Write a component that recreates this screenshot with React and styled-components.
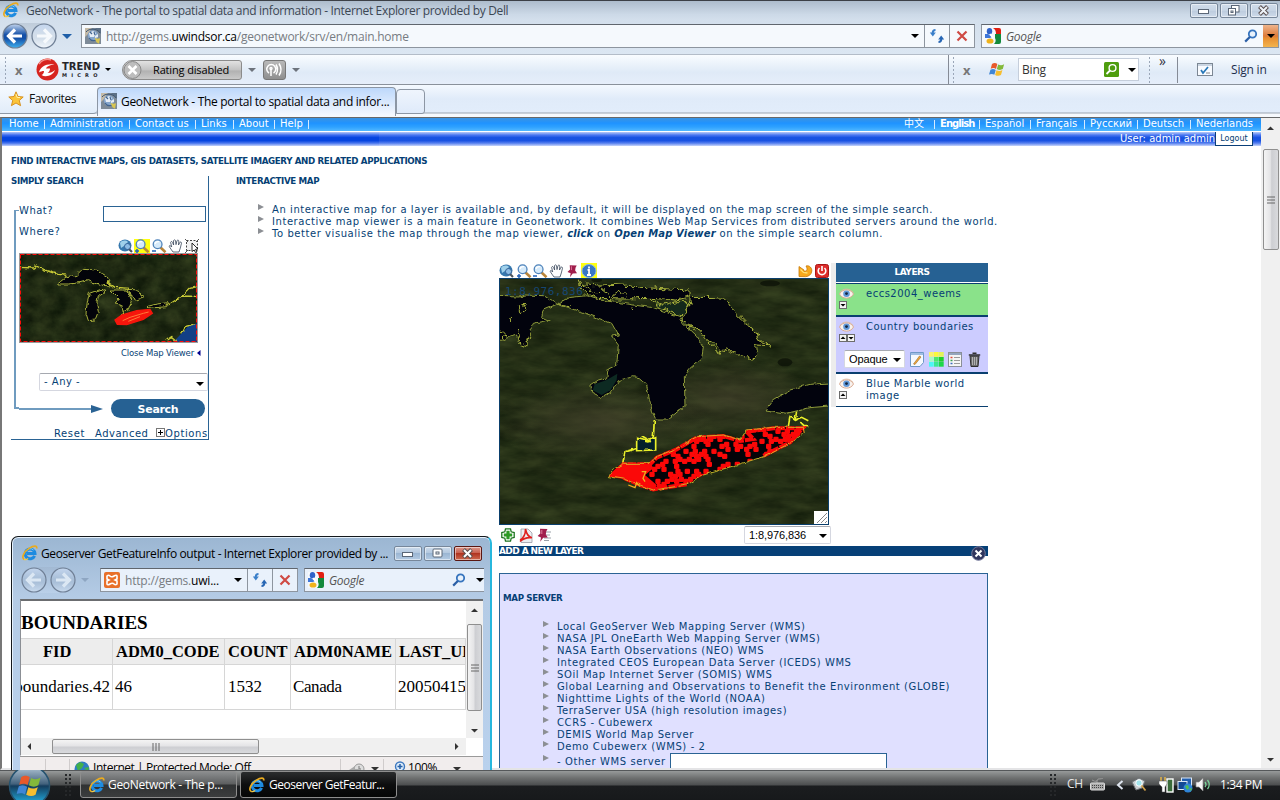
import React from "react";
import styled, { createGlobalStyle, css } from "styled-components";

const VERDANA = '"DejaVu Sans", Verdana, "Noto Sans CJK SC", sans-serif';
const SEGOE = '"Open Sans", "Noto Sans", sans-serif';

const Global = createGlobalStyle`
  * { box-sizing: border-box; }
  body { margin: 0; overflow: hidden; background: #fff; }
  svg { display: block; flex: none; }
`;

const Desktop = styled.div`
  position: relative;
  width: 1280px;
  height: 800px;
  overflow: hidden;
  display: flex;
  flex-direction: column;
  font-family: ${SEGOE};
`;

/* ---------- shared bits ---------- */
const Text = styled.span`
  flex: none;
  white-space: pre;
  font-size: ${(p) => p.$size || 12}px;
  letter-spacing: ${(p) => p.$ls || 0}px;
  width: ${(p) => (p.$w ? p.$w + "px" : "auto")};
  margin-left: ${(p) => p.$ml || 0}px;
  margin-top: ${(p) => p.$mt || 0}px;
  color: ${(p) => p.$c || "#000"};
  font-style: ${(p) => (p.$italic ? "italic" : "normal")};
`;
const Caret = styled.i`
  flex: none;
  width: 0;
  height: 0;
  border: ${(p) => p.$s || 4}px solid transparent;
  border-bottom-width: 0;
  border-top-color: ${(p) => p.$c || "#000"};
  margin-left: ${(p) => p.$ml || 0}px;
  margin-top: ${(p) => p.$mt || 0}px;
`;
const Grip = styled.i`
  flex: none;
  width: ${(p) => p.$w || 2}px;
  height: ${(p) => p.$h || 28}px;
  margin-left: ${(p) => p.$ml || 0}px;
  background: radial-gradient(circle, ${(p) => p.$c || "#9aa6b8"} 0 1px, transparent 1.2px) 0 0 / ${(p) => p.$step || 4}px 4px;
`;
const Spacer = styled.div`
  flex: 1;
`;
const IconBox = styled.span`
  flex: none;
  display: flex;
  margin-left: ${(p) => p.$ml || 0}px;
`;

/* ---------- icons ---------- */
const IELogo = ({ size = 16 }) => (
  <svg width={size} height={size} viewBox="0 0 16 16">
    <path d="M12.6 10.8A4.9 4.9 0 1 1 13 8.6H5" fill="none" stroke="#1e8be0" strokeWidth="3" />
    <path d="M4 6.6A4.6 4.6 0 0 1 11.5 5" fill="none" stroke="#7fd0fa" strokeWidth="1" />
    <path d="M2.2 14.4C-1 13 2 6.5 7 3.4S15.500 .4 14.600 3.600" fill="none" stroke="#e9ab20" strokeWidth="1.700" />
    <path d="M2.2 14.4c1.200.6 2.800 0 4-.800" fill="none" stroke="#f5c842" strokeWidth="1.200" />
  </svg>
);
const Globe = ({ size = 16 }) => (
  <svg width={size} height={size} viewBox="0 0 16 16">
    <rect width="16" height="16" fill="#7e8b98" />
    <path d="M0 0h7L3 6 0 9z" fill="#c3b9a6" />
    <path d="M10 0h6v6z" fill="#5c7086" />
    <circle cx="8" cy="7.500" r="5.200" fill="#86a6cc" />
    <path d="M4 5l4-2 3 2-2 4-4 0zM10 8l3-2v3l-3 1z" fill="#e6edf5" />
    <path d="M4 10c2 3 5 3 7 2M5 4l2 2M9 4l1 3" stroke="#41648f" strokeWidth="1.200" fill="none" />
    <path d="M1 4C4 0 12 0 15 5" stroke="#3c5674" fill="none" />
    <path d="M9.500 10l3 .800 2.500-.5-1 5.500-2.500-1.500z" fill="#d8c652" />
  </svg>
);
const NavDisc = ({ dir, fill, edge, arrow }) => (
  <svg width="26" height="26" viewBox="0 0 26 26">
    <defs>
      <linearGradient id={"d" + dir + fill.slice(1)} x1="0" y1="0" x2="0" y2="1">
        <stop offset="0" stopColor="#c4d6ee" />
        <stop offset=".45" stopColor={fill} />
        <stop offset=".6" stopColor={fill} />
        <stop offset="1" stopColor={edge} />
      </linearGradient>
    </defs>
    <circle cx="13" cy="13" r="12" fill={`url(#d${dir}${fill.slice(1)})`} stroke="#6f7f95" strokeWidth="1.200" />
    <path
      transform={dir === "r" ? "translate(26 0) scale(-1 1)" : undefined}
      d="M13 6.500L6.500 13l6.500 6.500M7.500 13H20"
      fill="none" stroke={arrow} strokeWidth="3.200"
    />
  </svg>
);
const GoogleIcon = () => (
  <svg width="16" height="16" viewBox="0 0 16 16">
    <rect width="16" height="16" fill="#f5f8fc" />
    <path d="M8 0h6a2 2 0 0 1 2 2v4h-5C11 3 10 1 8 0z" fill="#e01f12" />
    <path d="M10 6h6v8a2 2 0 0 1-2 2H9c2-2 2-4 1-6z" fill="#138a3c" />
    <path d="M0 6h3l4 3-2 1H0z" fill="#3f77d8" />
    <ellipse cx="4.500" cy="3.200" rx="2.700" ry="3.200" fill="#2f62c8" />
    <ellipse cx="5" cy="13" rx="3.500" ry="2.600" fill="#f0b31c" />
    <path d="M5 6l3 4" stroke="#fff" strokeWidth="1.500" />
  </svg>
);
const Refresh = () => (
  <svg width="16" height="16" viewBox="0 0 16 16">
    <path d="M6.500 2C3.800 2 3.700 3.500 3.700 5" fill="none" stroke="#3a7fc9" strokeWidth="2" />
    <path d="M.8 4.500h6L3.800 8.500z" fill="#3a7fc9" />
    <path d="M9.500 14c2.700 0 2.800-1.500 2.800-3" fill="none" stroke="#2766b4" strokeWidth="2" />
    <path d="M15.200 11.500h-6l3-4z" fill="#2766b4" />
  </svg>
);
const RedX = () => (
  <svg width="12" height="12" viewBox="0 0 12 12">
    <path d="M1.500 1.500l9 9M10.500 1.500l-9 9" stroke="#cf4a44" strokeWidth="2.200" />
  </svg>
);
const Magnifier = ({ size = 14 }) => (
  <svg width={size} height={size} viewBox="0 0 14 14">
    <circle cx="8.500" cy="5" r="3.700" fill="#e8f2fc" stroke="#3674be" strokeWidth="1.800" />
    <path d="M5.800 8L1.200 12.600" stroke="#2b5fa6" strokeWidth="2.200" />
  </svg>
);
const WinFlag = ({ size = 17 }) => (
  <svg width={size} height={size} viewBox="0 0 20 20">
    <path d="M3.500 3.500C6 2 8 2.300 9.800 3.600L8.200 9.300C6.500 8 4.300 8 2 9z" fill="#e8592a" />
    <path d="M10.800 4c2.500 1.300 4.500 1.300 7-.3L16.200 9.500c-2.300 1.400-4.800 1.200-7-.1z" fill="#83b93a" />
    <path d="M1.700 10.200c2.400-1.200 4.300-1 6.200.300L6.300 16.300C4.500 15 2.300 15 0 16z" fill="#3f86d6" />
    <path d="M8.800 10.900c2.300 1.300 4.600 1.300 7-.200l-1.700 5.800c-2.300 1.400-4.600 1.200-6.900-.100z" fill="#f6be30" />
  </svg>
);
const ZoomGlass = ({ mark }) => (
  <svg width="16" height="14" viewBox="0 0 16 14">
    <path d="M9 8l5.500 5.200" stroke="#b9853a" strokeWidth="2.600" />
    <circle cx="6.600" cy="5.300" r="4.400" fill="#d5eafa" stroke="#4f83ba" strokeWidth="1.300" />
    <path d="M4 5c.5-2 2-2.600 4-2.300" stroke="#fff" fill="none" strokeWidth="1.300" />
    <path d="M1 12h4" stroke="#1f5fb8" strokeWidth="1.500" />
    {mark === "+" && <path d="M3 10v4" stroke="#1f5fb8" strokeWidth="1.500" />}
  </svg>
);
const FullExtent = () => (
  <svg width="16" height="14" viewBox="0 0 16 14">
    <ellipse cx="7" cy="6.500" rx="6.500" ry="6" fill="#3678ae" />
    <path d="M2 4c2-3 6-3 8-1L6 7 3 9z" fill="#9fd0ea" />
    <path d="M9.500 8.500l4.500 4.500" stroke="#4a5560" strokeWidth="2.200" />
    <circle cx="9.500" cy="7.500" r="3" fill="#8cbce4" stroke="#2b568c" strokeWidth=".8" />
  </svg>
);
const Hand = () => (
  <svg width="15" height="14" viewBox="0 0 15 14">
    <path d="M5 13C4 11 2 9.500 1 7.200c.6-1 1.700-.6 2.700.8L2.600 3.300c.5-1.200 1.500-1 2 .2L5.600 6 5.500 1.600c.6-1 1.600-1 2 0L8 5.600l1-4c.7-.8 1.700-.6 1.800.5L10.500 6l1.500-2.800c.8-.5 1.600 0 1.500 1L12.300 9 11 13z" fill="#fff" stroke="#39465a" strokeWidth=".8" />
  </svg>
);
const SelectBox = () => (
  <svg width="15" height="14" viewBox="0 0 15 14">
    <rect x="1.500" y="1.500" width="11" height="10" fill="#f1f1f1" stroke="#444" strokeDasharray="2 1.500" />
    <path d="M0 0l3 3M14 0l-3 3M0 14l3-3" stroke="#555" />
    <path d="M7 4l6 6-2.500.3L12 13l-1.500.6L9.200 11 7 12.500z" fill="#fff" stroke="#111" strokeWidth=".9" />
  </svg>
);
const Pin = ({ lines }) => (
  <svg width={lines ? 15 : 14} height="14" viewBox="0 0 15 14">
    {lines && <path d="M8 4h7M8 7h6M8 10h7M8 12.500h5" stroke="#9aa0a8" />}
    <path d="M4 .8l7.500.2-1.300 2.500-.4 3 2 3-4.600.3L4.200 13.800 5 9.400 1.600 8l2.700-2.500z" fill="#a01e4c" />
    <path d="M5.800 2v4" stroke="#dd7b9c" />
  </svg>
);
const Info = () => (
  <svg width="16" height="14" viewBox="0 0 16 14">
    <ellipse cx="8" cy="7" rx="7" ry="6.500" fill="#3977c5" stroke="#85b4e8" />
    <path d="M8 2.500v2M6.500 6H8v5M6 11h4" stroke="#fff" strokeWidth="1.800" />
  </svg>
);
const Undo = () => (
  <svg width="15" height="14" viewBox="0 0 15 14">
    <path d="M1 2.500l5 3.500v1.500c1.500 0 3.500-1 3-3.500L8 2c3.500-1 6 2 5.800 5-.3 3.500-3 5.500-6.300 5.700L1 12.500z" fill="#f7a81c" stroke="#c77808" strokeWidth=".8" />
    <path d="M2.500 5.500l3 3 4 .500" fill="none" stroke="#ffe173" strokeWidth="1.300" />
  </svg>
);
const Power = () => (
  <svg width="14" height="14" viewBox="0 0 14 14">
    <rect x=".5" y=".5" width="13" height="13" rx="2" fill="#dc2c2a" stroke="#a81616" />
    <path d="M4.500 4a3.800 3.800 0 1 0 5 0" fill="none" stroke="#fff" strokeWidth="1.600" />
    <path d="M7 2v5" stroke="#fff" strokeWidth="1.600" />
  </svg>
);
const AddCross = () => (
  <svg width="14" height="14" viewBox="0 0 14 14">
    <path d="M4.500.8h5l.7 3 3 .7v5l-3 .7-.7 3h-5l-.7-3-3-.7v-5l3-.7z" fill="#fff" stroke="#1d7420" strokeWidth="1.300" />
    <path d="M7 2.800v8.400M2.800 7h8.400" stroke="#2c9a25" strokeWidth="3.200" />
  </svg>
);
const Pdf = () => (
  <svg width="14" height="15" viewBox="0 0 14 15">
    <path d="M2 1h7l4 4v9.500H2z" fill="#eceef2" stroke="#9a9ca6" strokeWidth=".8" />
    <path d="M1 12c4-2 5.500-5 5.500-11C7.500 6 9 9 13 9.800 8 9 5 10 1 13.500" fill="none" stroke="#e0201e" strokeWidth="1.600" />
  </svg>
);
const Eye = () => (
  <svg width="15" height="12" viewBox="0 0 15 12">
    <path d="M.5 6C3 .5 12 .5 14.500 6 12 11.500 3 11.500.500 6z" fill="#f8f2ee" stroke="#d9ab93" />
    <path d="M1 4.500C4 0 11 0 14 4.500" stroke="#dfbca5" fill="none" />
    <circle cx="7.500" cy="5.800" r="3.300" fill="#5f97d8" />
    <circle cx="7.500" cy="5.600" r="1.400" fill="#14243c" />
  </svg>
);
const Mover = ({ up }) => (
  <svg width="8" height="8" viewBox="0 0 8 8">
    <rect x=".5" y=".5" width="7" height="7" fill="#f4f4f4" stroke="#6c6c6c" />
    <path d={up ? "M1.500 5h5L4 2.500z" : "M1.500 3h5L4 5.500z"} fill="#000" />
  </svg>
);
const EditDoc = () => (
  <svg width="14" height="15" viewBox="0 0 14 15">
    <path d="M.5.500h13v10l-3.500 4H.5z" fill="#f5f9ff" stroke="#6f98c8" />
    <path d="M.5 2h13" stroke="#83aadb" strokeWidth="1.500" />
    <path d="M3.500 12L9.500 4l1.500 1-6 7.500z" fill="#f0a73a" stroke="#9c6a24" strokeWidth=".6" />
  </svg>
);
const Palette = () => (
  <svg width="15" height="15" viewBox="0 0 15 15">
    {["#fbf36a", "#fbf83c", "#e3f458", "#a7f7c8", "#4be86c", "#1fd02a", "#4bf7f4", "#3ae794", "#1dd748"].map((c, i) => (
      <rect key={i} x={(i % 3) * 5} y={Math.floor(i / 3) * 5} width="4.700" height="4.700" fill={c} />
    ))}
  </svg>
);
const Legend = () => (
  <svg width="14" height="15" viewBox="0 0 14 15">
    <rect x=".5" y=".5" width="13" height="14" fill="#f5f5f5" stroke="#8a8f98" />
    <path d="M1 2h12" stroke="#94a5bd" strokeWidth="2" />
    <path d="M2.500 5.500h2" stroke="#e04a3a" strokeWidth="1.500" />
    <path d="M2.500 8.500h2" stroke="#3c9f4c" strokeWidth="1.500" />
    <path d="M2.500 11.500h2" stroke="#3c6cc0" strokeWidth="1.500" />
    <path d="M6 5.500h6M6 8.500h6M6 11.500h6" stroke="#9a9a9a" />
  </svg>
);
const Trash = () => (
  <svg width="13" height="15" viewBox="0 0 13 15">
    <path d="M2 4h9l-1 10.500H3z" fill="#6e6e6e" stroke="#2e2e2e" />
    <path d="M.8 3h11.400M4.500 1.200h4" stroke="#2e2e2e" strokeWidth="1.600" />
    <path d="M4.500 5v8M6.500 5v8M8.500 5v8" stroke="#b8b8b8" strokeWidth=".9" />
  </svg>
);
const CloseBall = () => (
  <svg width="15" height="15" viewBox="0 0 15 15">
    <circle cx="7.500" cy="7.500" r="6.800" fill="#30365e" stroke="#777b9c" />
    <path d="M4.500 4.500l6 6M10.500 4.500l-6 6" stroke="#fff" strokeWidth="2" />
  </svg>
);
const Star = () => (
  <svg width="16" height="16" viewBox="0 0 16 16">
    <path d="M8 .8l2 4.700 5.200.5-3.900 3.500 1.300 5.200L8 12l-4.600 2.700 1.300-5.200L.8 6 6 5.500z" fill="#fbc43a" stroke="#d48a16" strokeWidth=".9" />
    <path d="M8 3l1.200 3.500H12" stroke="#fff1a8" fill="none" />
  </svg>
);
const TrendBall = () => (
  <svg width="23" height="23" viewBox="0 0 23 23">
    <circle cx="11.500" cy="11.500" r="11" fill="#d7241f" />
    <path d="M3 14.500C4 8.500 11 5 18.500 6.500 13.500 7 11 8.500 10 10.500h4c0 2-1 3.500-2.500 4.500 3 0 5.500-1.200 7.500-3-1.500 5-9 8-13.500 5 1.500-.5 2.500-2 2.500-4-2 0-3.500.5-5 1.500z" fill="#fff" />
    <path d="M3 6a10 10 0 0 1 12-4" stroke="#f5928c" fill="none" strokeWidth="1.500" />
  </svg>
);

/* ---------- browser chrome ---------- */
const TitleBar = styled.header`
  height: 20px;
  flex: none;
  display: flex;
  align-items: center;
  padding: 0 2px 1px 3px;
  border-top: 1px solid #3c4046;
  background: linear-gradient(#adbccc, #ccd9e7 70%, #d3dfec);
`;
const WinButton = styled.span`
  flex: none;
  width: 28px;
  height: ${(p) => p.$h || 15}px;
  margin-left: ${(p) => (p.$ml === undefined ? 2 : p.$ml)}px;
  border: 1px solid ${(p) => (p.$red ? "#5a1712" : "#77879a")};
  border-radius: 2px;
  box-shadow: inset 0 0 0 1px rgba(255, 255, 255, 0.5);
  background: ${(p) =>
    p.$red ? "linear-gradient(#dd9a8e, #c9604f 45%, #b03420 50%, #cf6a50)" : p.$blue ? "linear-gradient(#cddcec, #b3c8df 45%, #9bb6d3 50%, #b4cbe3)" : "linear-gradient(#d0dcea, #c6d4e4 50%, #bccbdd 51%, #cddaea)"};
  display: flex;
  align-items: center;
  justify-content: center;
`;
const Glyph = ({ kind, light }) => (
  <svg width="14" height="11" viewBox="0 0 14 11">
    {kind === "min" && <rect x="1.500" y="4.500" width="10" height="4" fill="#fff" stroke="#5b6777" />}
    {kind === "max" && <><rect x="2" y="1" width="9" height="8" rx="1" fill="#fff" stroke="#5b6777" /><rect x="5" y="4" width="3" height="2" fill="#fff" stroke="#5b6777" /></>}
    {kind === "restore" && <><rect x="4.500" y=".5" width="7.500" height="6.500" fill="#fff" stroke="#5b6777" /><rect x="1.500" y="3.500" width="7" height="6.500" fill="#fff" stroke="#5b6777" /><rect x="4" y="6" width="2" height="1.500" fill="#fff" stroke="#5b6777" /></>}
    {kind === "x" && <><path d="M2.500 1.500l8 8M10.500 1.500l-8 8" stroke="#5b5050" strokeWidth="4" /><path d="M3 2l7 7M10 2L3 9" stroke={light ? "#fff" : "#eef3f8"} strokeWidth="2" /></>}
  </svg>
);
const NavBar = styled.div`
  height: 34px;
  flex: none;
  display: flex;
  align-items: center;
  padding: 0 1px 2px 2px;
  background: linear-gradient(#d3dfec, #dbe6f2);
`;
const DiscPair = styled.div`
  flex: none;
  display: flex;
  gap: 3px;
  height: 26px;
  border-radius: 13px;
  background: linear-gradient(${(p) => (p.$blue ? "#a2b9d3, #bad0e9" : "#bfccda, #dbe5f0")});
`;
const Field = styled.div`
  flex: none;
  display: flex;
  align-items: center;
  height: 24px;
  width: ${(p) => p.$w}px;
  margin-left: ${(p) => p.$ml}px;
  padding-left: 3px;
  overflow: hidden;
  background: ${(p) => p.$bg || "#f5f9fd"};
  border: 1px solid #8d959f;
  border-top-color: #60666e;
  ${(p) => p.$open && css`border-right: 0;`}
`;
const FieldCell = styled.span`
  flex: none;
  width: ${(p) => p.$w}px;
  height: 100%;
  display: flex;
  align-items: center;
  justify-content: center;
  border-left: 1px solid #8d959f;
`;
const OrangeDrop = styled.span`
  flex: none;
  width: 15px;
  height: 100%;
  display: flex;
  align-items: center;
  justify-content: center;
  background: linear-gradient(#eeb48c, #dd7b3a 50%, #e88f32 60%, #f3b44d);
`;
const ToolBar = styled.div`
  height: 31px;
  flex: none;
  display: flex;
  align-items: center;
  padding-left: 4px;
  border-top: 1px solid #b3bcc8;
  border-bottom: 1px solid #8a919b;
  background: linear-gradient(#f9fcff, #dfeaf7 60%, #e6eefa);
`;
const VLine = styled.i`
  flex: none;
  width: 1px;
  height: ${(p) => p.$h || 29}px;
  margin-left: ${(p) => p.$ml || 0}px;
  background: ${(p) => p.$c || "#858b96"};
`;
const TrendName = styled.span`
  flex: none;
  width: 41px;
  margin-left: 3px;
  display: flex;
  flex-direction: column;
  font: bold 10px/10px "DejaVu Sans", sans-serif;
  color: #26262a;
  letter-spacing: 0;
  small {
    font-size: 5px;
    line-height: 6px;
    letter-spacing: 4.2px;
  }
`;
const Rating = styled.span`
  flex: none;
  width: 120px;
  height: 20px;
  margin-left: 11px;
  display: flex;
  align-items: center;
  border: 1px solid #8b8b8b;
  border-radius: 10px 3px 3px 10px;
  background: linear-gradient(#e2e2e2, #c2c2c2 50%, #b1b1b1 55%, #c9c9c9);
`;
const Signal = styled.span`
  flex: none;
  width: 23px;
  height: 20px;
  margin-left: 7px;
  border: 1px solid #777;
  border-radius: 3px;
  background: linear-gradient(#b9b9b9, #8f8f8f);
`;
const BingBox = styled.span`
  flex: none;
  width: 121px;
  height: 23px;
  margin-left: 12px;
  padding: 0 2px 0 3px;
  display: flex;
  align-items: center;
  background: #fff;
  border: 1px solid #c5cedb;
`;
const TabRow = styled.div`
  height: 32px;
  flex: none;
  display: flex;
  align-items: flex-start;
  background: linear-gradient(#f4f9ff, #e0ebf9 14px, #e2edfb 27px, #9ba5b1 28px, #f6f9fd 29px);
`;
const Favorites = styled.div`
  flex: none;
  width: 97px;
  height: 29px;
  padding: 0 0 1px 8px;
  display: flex;
  align-items: center;
  border-bottom: 1px solid #8e98a5;
  border-radius: 0 0 4px 0;
  background: linear-gradient(#f6faff, #e1ecf9);
`;
const Tab = styled.div`
  flex: none;
  width: ${(p) => p.$w}px;
  height: ${(p) => (p.$active ? 29 : 25)}px;
  margin-top: ${(p) => (p.$active ? 2 : 4)}px;
  padding: 0 0 2px 3px;
  display: flex;
  align-items: center;
  border: 1px solid #8c96a4;
  border-bottom-width: ${(p) => (p.$active ? 0 : 1)}px;
  border-radius: 4px 4px ${(p) => (p.$active ? "0 0" : "3px 0")};
  background: ${(p) => (p.$active ? "linear-gradient(#bdd8fb, #d9e8fd 50%, #f6f9fe)" : "linear-gradient(#eff5fd, #dfeafa)")};
`;

/* ---------- page ---------- */
const Viewport = styled.div`
  flex: none;
  height: 653px;
  display: flex;
  border-top: 1px solid #686868;
  border-left: 2px solid #777;
  border-bottom: 2px solid #e4e4e6;
`;
const Page = styled.main`
  width: 1259px;
  height: 650px;
  overflow: hidden;
  font-family: ${VERDANA};
  font-size: 10px;
  line-height: 12px;
  letter-spacing: 0.5px;
  color: #063f75;
`;
const TopLinks = styled.nav`
  height: 13px;
  margin-bottom: 1px;
  display: flex;
  justify-content: space-between;
  letter-spacing: 0;
  background: linear-gradient(#3b93e2, #1f93ff 40%, #2ea2ff 70%, #52b8ff);
  color: #fff;
`;
const LinkSet = styled.div`
  display: flex;
  padding-left: 7px;
  padding-right: 9px;
`;
const TopLink = styled.a`
  width: ${(p) => p.$w}px;
  margin-right: ${(p) => (p.$last ? 0 : 5)}px;
  line-height: 12px;
  white-space: nowrap;
  font-weight: ${(p) => (p.$bold ? "bold" : "normal")};
  letter-spacing: ${(p) => p.$ls || 0}px;
  background: ${(p) => (p.$last ? "none" : "linear-gradient(#d5ebff, #d5ebff) right 2px / 1px 9px no-repeat")};
`;
const UserBar = styled.div`
  height: 14px;
  padding-right: 8px;
  display: flex;
  justify-content: flex-end;
  line-height: 14px;
  letter-spacing: 0;
  color: #fff;
  background: linear-gradient(90deg, #fff0 377px, #ffffff14 377px), linear-gradient(#b4c8f8, #3c6cf0 22%, #0544e0 40%, #0544e0 62%, #4a76ee 80%, #c3d1fa);
`;
const Logout = styled.button`
  width: 38px;
  height: 14px;
  margin: 0;
  padding: 0;
  font: 8px/11px ${VERDANA};
  color: #063f75;
  background: #fff;
  border: 1px solid #0a3f78;
  border-top: 0;
  letter-spacing: 0;
`;
const PageBody = styled.div`
  padding: 10px 0 0 9px;
`;
const Heading = styled.h2`
  margin: 0;
  height: 11px;
  font-size: 8.7px;
  line-height: 11px;
  font-weight: bold;
  white-space: nowrap;
  letter-spacing: -0.37px;
`;
const Columns = styled.div`
  display: flex;
  align-items: flex-start;
  margin-top: 9px;
`;
const Aside = styled.aside`
  width: 198px;
  height: 264px;
  border-right: 1px solid #2a6394;
  border-bottom: 1px solid #2a6394;
`;
const FormGrid = styled.div`
  display: grid;
  grid-template-columns: 5px 189px;
  padding-left: 3px;
  margin-top: 18px;
`;
const Bracket = styled.div`
  height: 199px;
  margin-top: 5px;
  border: 2px solid #6f9bbf;
  border-width: 1px 0 2px 2px;
`;
const FormBody = styled.div`
  display: flex;
  flex-direction: column;
`;
const WhatRow = styled.label`
  display: flex;
  justify-content: space-between;
  line-height: 12px;
  padding-right: 2px;
`;
const WhatInput = styled.span`
  width: 103px;
  height: 16px;
  margin-top: 1px;
  border: 1px solid #2a6394;
  background: #fff;
`;
const MiniTools = styled.div`
  display: flex;
  height: ${(p) => p.$h || 15}px;
  padding-left: ${(p) => p.$pl || 0}px;
  align-items: center;
`;
const ToolIcon = styled.span`
  width: ${(p) => p.$w || 16}px;
  height: ${(p) => p.$h || 14}px;
  display: flex;
  align-items: center;
  justify-content: center;
  background: ${(p) => (p.$on ? "#ffff10" : "transparent")};
`;
const MiniMapBox = styled.div`
  width: 179px;
  height: 90px;
  border: 1px solid #999;
`;
const CloseViewer = styled.a`
  display: flex;
  align-items: center;
  gap: 3px;
  margin: 4px 0 14px 102px;
  height: 12px;
  font-size: 8.5px;
  letter-spacing: -0.15px;
  white-space: nowrap;
`;
const SelectBoxUi = styled.span`
  display: flex;
  flex: none;
  align-items: center;
  justify-content: space-between;
  width: ${(p) => p.$w}px;
  height: 18px;
  padding: 0 3px 0 4px;
  background: #fff;
  color: ${(p) => (p.$plain ? "#000" : "#063f75")};
  border: 1px solid #d5d7e0;
  border-top-color: #a6a9b0;
  border-radius: 2px;
  font-family: ${(p) => (p.$plain ? '"Liberation Sans", sans-serif' : "inherit")};
  font-size: ${(p) => (p.$plain ? 11 : 10)}px;
  letter-spacing: ${(p) => (p.$plain ? "-0.1px" : "inherit")};
`;
const SearchRow = styled.div`
  display: flex;
  align-items: center;
  margin-top: 8px;
`;
const SearchButton = styled.span`
  width: 94px;
  height: 19px;
  margin-left: 7px;
  border-radius: 10px;
  background: #266193;
  color: #fff;
  font-weight: bold;
  font-size: 11px;
  line-height: 21px;
  text-align: center;
  letter-spacing: -0.3px;
`;
const FormLinks = styled.div`
  display: flex;
  margin: 10px 0 0 43px;
  white-space: nowrap;
`;
const Main = styled.section`
  width: 770px;
  margin-left: 27px;
`;
const Bullets = styled.ul`
  list-style: none;
  margin: ${(p) => p.$mt}px 0 0 ${(p) => p.$ml}px;
  padding: 0;
  letter-spacing: ${(p) => p.$ls || 0.57}px;
`;
const Bullet = styled.li`
  height: ${(p) => p.$h || 12}px;
  line-height: ${(p) => p.$lh || 12}px;
  display: flex;
  white-space: nowrap;
  b { letter-spacing: 0.15px; }
  &::before {
    content: "";
    flex: none;
    width: 0;
    height: 0;
    margin: ${(p) => p.$mk || 0}px 8px 0 0;
    border: 3px solid transparent;
    border-left: 6px solid #8c8f94;
    border-right: 0;
  }
`;
const MapWidget = styled.div`
  display: flex;
  margin: 23px 0 0 263px;
`;
const MapColumn = styled.div`
  width: 332px;
`;
const MapFrame = styled.div`
  width: 330px;
  height: 247px;
  border: 1px solid #0a3f6c;
  position: relative;
`;
const ScaleText = styled.span`
  position: absolute;
  left: 5px;
  top: 7px;
  color: #154673;
  font: 11px/12px "DejaVu Sans Mono", monospace;
  letter-spacing: 0.5px;
`;
const Resize = styled.span`
  position: absolute;
  right: 0;
  bottom: 0;
`;
const Layers = styled.div`
  width: 157px;
  height: 144px;
  border-left: 5px solid #ececec;
`;
const LayersHead = styled.div`
  height: 19px;
  margin-bottom: 1px;
  background: #266193;
  color: #fff;
  font: bold 9px/19px ${VERDANA};
  letter-spacing: -0.5px;
  text-align: center;
`;
const LayerRow = styled.div`
  height: ${(p) => p.$h}px;
  background: ${(p) => p.$bg};
  border-top: ${(p) => (p.$first ? 1 : 0)}px solid #0a3f70;
  border-bottom: ${(p) => p.$b || 2}px solid #0a3f70;
`;
const LayerTop = styled.div`
  display: flex;
  padding: 4px 0 0 3px;
  line-height: 12px;
`;
const LayerSide = styled.div`
  width: 27px;
  svg { margin-bottom: 1px; }
`;
const Movers = styled.div`
  display: flex;
`;
const LayerTools = styled.div`
  display: flex;
  align-items: center;
  padding: 7px 0 0 8px;
`;
const AddBar = styled.div`
  width: 489px;
  height: 10px;
  margin: 1px 0 0 263px;
  padding-right: 2px;
  display: flex;
  justify-content: space-between;
  background: #064077;
  color: #fff;
  font: bold 9px/10px ${VERDANA};
  letter-spacing: -0.6px;
`;
const ServerPanel = styled.div`
  width: 489px;
  height: 230px;
  margin: 17px 0 0 263px;
  padding: 19px 0 0 3px;
  border: 1px solid #2a6394;
  background: #e0e0ff;
`;
const ServerInput = styled.span`
  width: 217px;
  height: 20px;
  margin-left: 4px;
  background: #fff;
  border: 1px solid #2a6394;
`;
const ScrollBar = styled.div`
  display: flex;
  flex-direction: ${(p) => (p.$x ? "row" : "column")};
  align-items: center;
  flex: none;
  width: ${(p) => p.$w}px;
  height: ${(p) => p.$h}px;
  padding: ${(p) => p.$pad};
  background: #f0f0f0;
`;
const Thumb = styled.div`
  flex: none;
  width: ${(p) => p.$w}px;
  height: ${(p) => p.$h}px;
  margin: ${(p) => p.$m || 0};
  display: flex;
  align-items: center;
  justify-content: center;
  border: 1px solid #8f8f8f;
  border-radius: 2px;
  background: linear-gradient(${(p) => (p.$x ? "180deg" : "90deg")}, #f4f4f4, #e4e4e6 45%, #cdced2 55%, #d9dadd);
`;
const Ridges = ({ x }) => (
  <svg width="8" height="8" viewBox="0 0 8 8">
    <path d={x ? "M1 0v8M4 0v8M7 0v8" : "M0 1h8M0 4h8M0 7h8"} stroke="#666" />
  </svg>
);
const Arrow = ({ d }) => (
  <svg width="9" height="9" viewBox="0 0 9 9">
    <path d={{ u: "M1 6h7L4.500 2.500z", d: "M1 3h7L4.500 6.500z", l: "M6 1v7L2.500 4.500z", r: "M3 1v7l3.500-3.500z" }[d]} fill="#333" />
  </svg>
);

/* ---------- maps ---------- */
const Terrain = ({ id, base, seed, freq }) => (
  <filter id={id} x="0" y="0" width="100%" height="100%" colorInterpolationFilters="sRGB">
    <feTurbulence type="fractalNoise" baseFrequency={freq} numOctaves="5" seed={seed} />
    <feColorMatrix values={base} />
  </filter>
);
const Rough = ({ id, freq, scale, seed }) => (
  <filter id={id} x="-5%" y="-5%" width="110%" height="110%" colorInterpolationFilters="sRGB">
    <feTurbulence type="fractalNoise" baseFrequency={freq} numOctaves="2" seed={seed} result="n" />
    <feDisplacementMap in="SourceGraphic" in2="n" scale={scale} xChannelSelector="R" yChannelSelector="G" />
  </filter>
);
const HURON = "M20 124L90 126 105 120 160 122 200 148 235 128 290 122 330 135 420 148 490 158 570 185 578 205 620 245 640 275 635 310 600 340 583 365 585 455 560 470 530 492 497 492 487 470 478 430 470 390 445 368 430 365 385 377 365 410 335 427 305 412 303 390 325 375 350 368 355 342 380 330 385 270 365 243 385 240 365 205 300 180 250 162 200 148 160 165 155 185 178 195 130 205 115 240 100 275 85 262 80 240 50 250 20 264z";
const CHANNEL = "M265 75L290 90 330 93 400 90 440 96 500 100 600 105 600 125 560 135 520 132 480 130 400 132 320 130 280 112z";
const GEORGIAN = "M600 128L650 127 705 130 725 160 745 180 770 205 800 235 805 255 838 272 800 270 803 300 785 315 740 296 690 285 670 262 640 250 630 225 590 212 578 190 600 150z";
const ONTARIO = "M1030 383L960 388 900 405 850 435 828 465 890 475 960 458 1030 452z";
const ERIE = "M355 665L375 640 400 625 480 625 500 605 560 580 620 545 700 540 750 555 770 525 850 517 940 517 943 530 900 565 820 605 740 630 640 660 590 690 490 705 450 690 400 672z";
const cells = [];
for (let r = 0; r < 13; r++) {
  for (let c = 0; c < 34; c++) {
    const x = 478 + c * 14 + (r % 3) * 4, y = 515 + r * 15 + (c % 2) * 6;
    if ((r * 7 + c * 5 + ((r * c) % 4) * 3) % 9 < 4) cells.push([x, y]);
  }
}
const BigMap = () => (
  <svg width="328" height="245" viewBox="30 72 984 735">
    <defs>
      <Terrain id="landA" seed="7" freq="0.009 0.028" base="0.17 0.06 0 0 0.025  0.17 0.08 0 0 0.055  0.10 0.04 0 0 0.012  0 0 0 0 1" />
      <Rough id="rough" freq=".05" scale="14" seed="3" />
      <Rough id="rougher" freq=".06" scale="26" seed="5" />
      <clipPath id="erie"><path d={ERIE} /></clipPath>
      <radialGradient id="dim"><stop offset="0" stopColor="#4a4530" stopOpacity=".6" /><stop offset="1" stopColor="#4a4530" stopOpacity="0" /></radialGradient>
    </defs>
    <rect x="30" y="72" width="984" height="735" filter="url(#landA)" />
    <ellipse cx="330" cy="500" rx="330" ry="120" fill="url(#dim)" />
    <ellipse cx="720" cy="430" rx="260" ry="120" fill="url(#dim)" />
    <g fill="#0a0f06" opacity=".7"><ellipse cx="840" cy="85" rx="30" ry="9" /><ellipse cx="885" cy="322" rx="22" ry="12" /><ellipse cx="320" cy="75" rx="16" ry="6" /></g>
    <g stroke="#8f9b3a" strokeWidth="3" fill="#02030d" filter="url(#rough)">
      <path d={HURON} />
      <path d={ONTARIO} />
    </g>
    <path d="M308 406L314 388 350 375 382 356 380 375 362 405 335 420z" fill="#0d2a22" />
    <g stroke="#a9b33c" strokeWidth="3" fill="#02030d" filter="url(#rougher)">
      <path d={CHANNEL} />
      <path d={GEORGIAN} />
      <path d="M480 135L520 150 560 140 600 140 595 160 570 182 520 162z" fill="#14291b" />
      <path d="M85 155l15-8 8 18-16 10zM55 190l8 4M85 225l8 40 14 10 18-50M32 230l12 10-8 18M205 150l40 6M425 158l6 6" />
      <path d="M270 85l50 30 15-15 30 25 25-20 25 22M765 205l30 25 5 25 25 0 15 20M640 250l30 25 15 20 25-15 30 15" fill="none" />
    </g>
    <g fill="#03202b" stroke="#eaf02a" strokeWidth="5" filter="url(#rough)">
      <path d="M440 550L470 558 497 548 497 585 440 587z" />
      <path d="M493 495L490 545 480 560 455 545M440 580L405 590 398 625M895 515l5-30 15 10 5-25M915 495l20-8 20 10M930 500l15 15 10 0" fill="none" />
    </g>
    <path d={ERIE} fill="#050308" />
    <g clipPath="url(#erie)">
      {cells.map(([x, y], i) => <rect key={i} x={x} y={y} width="16" height="16" rx="4" fill="#fb0808" />)}
      <path d="M350 665L400 620 480 620 490 640 465 660 500 690 490 712 350 700z" fill="#fb0808" />
    </g>
    <path d="M368 660L400 628 480 628 500 608 560 583 620 548 700 543 750 558 790 552 770 530 850 520 938 520 900 562 820 602M590 688L490 703 450 690 400 668" fill="none" stroke="#fb0808" strokeWidth="12" strokeDasharray="26 3" />
    <path d={ERIE} fill="none" stroke="#d6c92a" strokeWidth="2.500" filter="url(#rough)" />
    <path d="M415 690l20 8 5-15 10 12M455 650l12 0-8 20 6 10" fill="none" stroke="#f0b01e" strokeWidth="4" />
  </svg>
);
const MiniMap = () => (
  <svg width="177" height="88" viewBox="60 312 531 264">
    <defs>
      <Terrain id="landB" seed="12" freq="0.02 0.025" base="0.18 0.06 0 0 0  0.18 0.08 0 0 0.03  0.10 0.04 0 0 0  0 0 0 0 1" />
      <Rough id="rs" freq=".07" scale="14" seed="2" />
    </defs>
    <rect x="60" y="312" width="531" height="264" filter="url(#landB)" />
    <path d="M591 520L565 528 545 550 520 576 591 576z" fill="#123f86" />
    <g fill="#03040a" stroke="#a9b03c" strokeWidth="3" filter="url(#rs)">
      <path d="M172 402L200 380 232 376 250 358 290 360 322 380 330 408 300 405 262 392 240 398 205 402z" />
      <path d="M268 430L300 418 318 424 295 440 290 462 295 485 285 510 265 512 258 490 262 455z" />
      <path d="M330 420L380 420 395 450 385 478 370 485 365 465 345 462 355 445z" />
      <path d="M385 418L415 420 430 442 410 450 390 435z" />
      <path d="M440 470L470 462 505 458 500 470 445 475z" />
      <path d="M60 352L100 354 108 348 140 362 170 372 200 376M320 395L345 412 390 415M505 465L550 435 570 415 591 410M545 438L591 439M370 485l-5 10M545 550l10-20 30-8M500 570l15-10 15 12" fill="none" stroke="#c8ca36" strokeWidth="4" />
    </g>
    <path d="M345 510L365 495 410 482 450 478 457 490 430 508 380 524 352 523z" fill="#f6160c" stroke="#f6160c" strokeWidth="4" />
    <path d="M368 512L390 502 430 490 446 486M385 514l35-14" fill="none" stroke="#ff7a38" strokeWidth="3" />
    <rect x="61.500" y="313.500" width="528" height="261" fill="none" stroke="#ff0a0a" strokeWidth="3" strokeDasharray="12 6" />
  </svg>
);

/* ---------- popup window ---------- */
const Popup = styled.section`
  position: absolute;
  left: 11px;
  top: 536px;
  width: 481px;
  height: 234px;
  padding: 1px 8px 0 8px;
  overflow: hidden;
  border: 1px solid #14181c;
  border-right: 2px solid #27b7dd;
  border-bottom: 0;
  border-radius: 7px 7px 0 0;
  box-shadow: inset 0 1px 0 #e5f1fc, inset 1px 0 0 #e5f1fc;
  background: linear-gradient(#9bb6d2, #b4cbe5 60px, #b9d1ed);
`;
const PopTitle = styled.div`
  height: 29px;
  padding: 1px 0 0 2px;
  display: flex;
  align-items: center;
`;
const PopNav = styled.div`
  height: 26px;
  display: flex;
  align-items: center;
  padding-left: 1px;
`;
const PopContent = styled.div`
  width: 463px;
  height: 157px;
  margin-top: 6px;
  border-top: 2px solid #6b6d70;
  border-left: 1px solid #8b8f95;
  border-bottom: 1px solid #fff;
  background: #fff;
`;
const PopMain = styled.div`
  display: flex;
  height: 137px;
`;
const Doc = styled.div`
  width: 445px;
  height: 137px;
  overflow: hidden;
  font-family: "Liberation Serif", serif;
  color: #000;
  white-space: nowrap;
`;
const DocTitle = styled.div`
  height: 37px;
  font-size: 19px;
  line-height: 43px;
  font-weight: bold;
`;
const Row = styled.div`
  display: grid;
  grid-template-columns: 92px 112px 66px 105px 70px;
  height: ${(p) => p.$h}px;
  border-top: 1px solid #d6d6d6;
  background: ${(p) => (p.$head ? "#ededed" : "#fff")};
  font-weight: ${(p) => (p.$head ? "bold" : "normal")};
  font-size: ${(p) => (p.$head ? 16.5 : 17)}px;
  ${(p) => !p.$head && css`border-bottom: 1px solid #d6d6d6;`}
`;
const Cell = styled.div`
  display: flex;
  align-items: center;
  overflow: hidden;
  padding: 0 2px 0 ${(p) => p.$pl || 2}px;
  border-right: 1px solid #d6d6d6;
  letter-spacing: ${(p) => p.$ls || 0}px;
  justify-content: ${(p) => p.$j || "flex-start"};
`;
const Status = styled.div`
  width: 463px;
  height: 20px;
  display: flex;
  align-items: flex-start;
  padding-top: 2px;
  background: #f1eded;
  border-top: 1px solid #9a9a9a;
`;
const Lowered = styled.span`
  flex: none;
  display: flex;
  margin: ${(p) => p.$t}px 0 0 ${(p) => p.$ml || 0}px;
`;

/* ---------- task bar ---------- */
const TaskBar = styled.footer`
  position: relative;
  height: 30px;
  flex: none;
  display: flex;
  align-items: center;
  padding: 0 0 2px 64px;
  border-top: 1px solid #55585a;
  background: linear-gradient(#979a9a, #6e7070 7px, #4c4e4f 14px, #1b1d1f 15px, #17191b);
`;
const Orb = styled.span`
  position: absolute;
  left: 8px;
  top: -6px;
`;
const Task = styled.span`
  flex: none;
  width: 157px;
  height: 27px;
  margin-left: ${(p) => p.$ml}px;
  padding-left: 8px;
  display: flex;
  align-items: center;
  border: 1px solid #8e8e8e;
  border-radius: 3px;
  background: ${(p) => (p.$on ? "linear-gradient(#2b2d2e, #0d0e0f 50%, #050606)" : "linear-gradient(#8b8d8e, #5d5f60 48%, #303233 52%, #3b3d3e)")};
`;
const Strong = styled.b`
  font-weight: normal;
  color: #000;
`;
const CloseMark = styled.span`
  flex: none;
  width: ${(p) => p.$w}px;
  margin-left: 9px;
  font: bold 13px/16px ${SEGOE};
  color: #777;
`;

const tops = [["Home", 36], ["Administration", 80], ["Contact us", 61], ["Links", 33], ["About", 36], ["Help", 29]];
const langs = [["中文", 31], ["English", 40, true], ["Español", 46], ["Français", 49], ["Русский", 48], ["Deutsch", 48], ["Nederlands", 56]];
const servers = [
  "Local GeoServer Web Mapping Server (WMS)",
  "NASA JPL OneEarth Web Mapping Server (WMS)",
  "NASA Earth Observations (NEO) WMS",
  "Integrated CEOS European Data Server (ICEDS) WMS",
  "SOil Map Internet Server (SOMIS) WMS",
  "Global Learning and Observations to Benefit the Environment (GLOBE)",
  "Nighttime Lights of the World (NOAA)",
  "TerraServer USA (high resolution images)",
  "CCRS - Cubewerx",
  "DEMIS World Map Server",
  "Demo Cubewerx (WMS) - 2",
];

function Chrome() {
  return (
    <>
      <TitleBar>
        <IELogo />
        <Text $ml={7} $c="#3c4754" $ls={-0.34}>GeoNetwork - The portal to spatial data and information - Internet Explorer provided by Dell</Text>
        <Spacer />
        <WinButton><Glyph kind="min" /></WinButton>
        <WinButton><Glyph kind="restore" /></WinButton>
        <WinButton><Glyph kind="x" /></WinButton>
      </TitleBar>
      <NavBar>
        <DiscPair>
          <NavDisc dir="l" fill="#1450a8" edge="#3fb0ee" arrow="#fff" />
          <NavDisc dir="r" fill="#d3deea" edge="#f2f7fc" arrow="#f6f9fc" />
        </DiscPair>
        <Caret $ml={5} $s={5} $c="#1f5fa8" />
        <Field $w={894} $ml={9}>
          <Globe />
          <Text $ml={5} $c="#777c82" $ls={-0.24}>http://gems.<Strong>uwindsor.ca</Strong>/geonetwork/srv/en/main.home</Text>
          <Spacer />
          <Caret />
          <IconBox $ml={5} />
          <FieldCell $w={25}><Refresh /></FieldCell>
          <FieldCell $w={25}><RedX /></FieldCell>
        </Field>
        <Field $w={298} $ml={6}>
          <GoogleIcon />
          <Text $ml={5} $c="#555" $italic $ls={-0.3}>Google</Text>
          <Spacer />
          <Magnifier />
          <IconBox $ml={5} />
          <OrangeDrop><Caret /></OrangeDrop>
        </Field>
      </NavBar>
      <ToolBar>
        <Grip />
        <CloseMark $w={13}>x</CloseMark>
        <IconBox $ml={8}><TrendBall /></IconBox>
        <TrendName>TREND<small>MICRO</small></TrendName>
        <Caret $ml={2} $s={3} />
        <Rating>
          <svg width="20" height="18" viewBox="0 0 20 18"><circle cx="9.500" cy="9" r="8.500" fill="#bdbdbd" stroke="#8a8a8a" /><path d="M5.500 5l8 8M13.500 5l-8 8" stroke="#fff" strokeWidth="2.600" /></svg>
          <Text $ml={10} $size={11} $ls={-0.15}>Rating disabled</Text>
        </Rating>
        <Caret $ml={6} $s={4} $c="#6d737c" />
        <Signal>
          <svg width="21" height="18" viewBox="0 0 21 18"><g fill="none" stroke="#fff" strokeWidth="1.500"><path d="M7 15V8M5 12a4.500 4.500 0 1 1 4.500 0M12 3.500q3 5 0 10M15 2.500q4 6 0 12" /><circle cx="7" cy="7.500" r="1" /></g></svg>
        </Signal>
        <Caret $ml={6} $s={4} $c="#6d737c" />
        <VLine $ml={648} />
        <Grip $ml={3} />
        <CloseMark $w={12}>x</CloseMark>
        <IconBox $ml={14}><WinFlag /></IconBox>
        <BingBox>
          <Text $c="#333" $ls={-0.2}>Bing</Text>
          <Spacer />
          <svg width="15" height="15" viewBox="0 0 15 15"><rect width="15" height="15" rx="1.500" fill="#4e9d0e" /><circle cx="8.500" cy="6" r="3.400" fill="none" stroke="#fff" strokeWidth="1.400" /><path d="M6 8.500L2.500 12" stroke="#fff" strokeWidth="1.800" /></svg>
          <Caret $ml={9} />
        </BingBox>
        <Grip $ml={9} />
        <Text $ml={9} $mt={-18} $size={14} $c="#334" $w={18}>»</Text>
        <VLine $h={26} />
        <IconBox $ml={19}>
          <svg width="16" height="13" viewBox="0 0 16 13"><rect x=".5" y=".5" width="15" height="12" fill="#f8fbff" stroke="#7c8794" /><path d="M1 2h14" stroke="#9db0c5" /><path d="M4 7l2 3 5-6" fill="none" stroke="#2777b8" strokeWidth="1.700" /><path d="M9 10h4" stroke="#888" /></svg>
        </IconBox>
        <Text $ml={18} $c="#1c2c4c" $ls={-0.2}>Sign in</Text>
      </ToolBar>
      <TabRow>
        <Favorites><Star /><Text $ml={5} $c="#111" $ls={-0.4}>Favorites</Text></Favorites>
        <Tab $w={299} $active><Globe /><Text $ml={4} $ls={-0.3}>GeoNetwork - The portal to spatial data and infor...</Text></Tab>
        <Tab $w={29} />
      </TabRow>
    </>
  );
}

function SearchForm() {
  return (
    <Aside>
      <Heading>SIMPLY SEARCH</Heading>
      <FormGrid>
        <Bracket />
        <FormBody>
          <WhatRow>What?<WhatInput /></WhatRow>
          <Text $size={10} $c="inherit" $ls={0.6} $mt={4}>Where?</Text>
          <MiniTools $pl={99}>
            <ToolIcon><FullExtent /></ToolIcon>
            <ToolIcon $on><ZoomGlass mark="+" /></ToolIcon>
            <ToolIcon $w={17}><ZoomGlass mark="-" /></ToolIcon>
            <ToolIcon $w={17}><Hand /></ToolIcon>
            <ToolIcon $w={17}><SelectBox /></ToolIcon>
          </MiniTools>
          <MiniMapBox><MiniMap /></MiniMapBox>
          <CloseViewer>Close Map Viewer<svg width="4" height="6" viewBox="0 0 4 6"><path d="M3.500 0v6L0 3z" fill="#00008c" /></svg></CloseViewer>
          <IconBox $ml={20}><SelectBoxUi $w={169}>- Any -<Caret $mt={3} /></SelectBoxUi></IconBox>
          <SearchRow>
            <svg width="85" height="10" viewBox="0 0 85 10"><path d="M0 5h74" stroke="#6f9bbf" strokeWidth="2" /><path d="M72 1l12 4-12 4z" fill="#2a6394" /></svg>
            <SearchButton>Search</SearchButton>
          </SearchRow>
        </FormBody>
      </FormGrid>
      <FormLinks>
        <Text $size={10} $c="inherit" $ls={0.6} $w={41}>Reset</Text>
        <Text $size={10} $c="inherit" $ls={0.5} $w={61}>Advanced</Text>
        <svg width="9" height="9" viewBox="0 0 9 9"><rect x=".5" y=".5" width="8" height="8" fill="#fff" stroke="#777" /><path d="M4.500 2v5M2 4.500h5" stroke="#000" /></svg>
        <Text $size={10} $c="inherit" $ls={0.6}>Options</Text>
      </FormLinks>
    </Aside>
  );
}

function LayerList() {
  return (
    <Layers>
      <LayersHead>LAYERS</LayersHead>
      <LayerRow $bg="#8ae28a" $h={34} $first>
        <LayerTop><LayerSide><Eye /><Mover /></LayerSide>eccs2004_weems</LayerTop>
      </LayerRow>
      <LayerRow $bg="#ccccff" $h={57}>
        <LayerTop><LayerSide><Eye /><Movers><Mover up /><Mover /></Movers></LayerSide>Country boundaries</LayerTop>
        <LayerTools>
          <SelectBoxUi $w={61} $plain>Opaque<Caret $mt={2} /></SelectBoxUi>
          <IconBox $ml={5}><EditDoc /></IconBox>
          <IconBox $ml={5}><Palette /></IconBox>
          <IconBox $ml={4}><Legend /></IconBox>
          <IconBox $ml={6}><Trash /></IconBox>
        </LayerTools>
      </LayerRow>
      <LayerRow $bg="#fff" $h={33} $b={1}>
        <LayerTop><LayerSide><Eye /><Mover up /></LayerSide><span>Blue Marble world<br />image</span></LayerTop>
      </LayerRow>
    </Layers>
  );
}

function GeoPage() {
  return (
    <Viewport>
      <Page>
        <TopLinks>
          <LinkSet>{tops.map(([t, w]) => <TopLink key={t} $w={w}>{t}</TopLink>)}</LinkSet>
          <LinkSet>{langs.map(([t, w, b], i) => <TopLink key={t} $w={w} $bold={b} $ls={b ? -0.95 : 0} $last={i === 6}>{t}</TopLink>)}</LinkSet>
        </TopLinks>
        <UserBar>User: admin admin<Logout>Logout</Logout></UserBar>
        <PageBody>
          <Heading>FIND INTERACTIVE MAPS, GIS DATASETS, SATELLITE IMAGERY AND RELATED APPLICATIONS</Heading>
          <Columns>
            <SearchForm />
            <Main>
              <Heading>INTERACTIVE MAP</Heading>
              <Bullets $mt={17} $ml={22} $ls={0.56}>
                <Bullet>An interactive map for a layer is available and, by default, it will be displayed on the map screen of the simple search.</Bullet>
                <Bullet>Interactive map viewer is a main feature in Geonetwork. It combines Web Map Services from distributed servers around the world.</Bullet>
                <Bullet><span>To better visualise the map through the map viewer, <b><i>click</i></b> on <b><i>Open Map Viewer</i></b> on the simple search column.</span></Bullet>
              </Bullets>
              <MapWidget>
                <MapColumn>
                  <MiniTools>
                    <ToolIcon><FullExtent /></ToolIcon>
                    <ToolIcon $w={17}><ZoomGlass mark="+" /></ToolIcon>
                    <ToolIcon><ZoomGlass mark="-" /></ToolIcon>
                    <ToolIcon $w={17}><Hand /></ToolIcon>
                    <ToolIcon><Pin /></ToolIcon>
                    <ToolIcon $on $h={15}><Info /></ToolIcon>
                    <IconBox $ml={201}><Undo /></IconBox>
                    <IconBox $ml={2}><Power /></IconBox>
                  </MiniTools>
                  <MapFrame>
                    <BigMap />
                    <ScaleText>1:8,976,836</ScaleText>
                    <Resize><svg width="14" height="13" viewBox="0 0 14 13"><rect width="14" height="13" fill="#fff" /><path d="M3 12L13 2M7 12l6-6M11 12l2-2" stroke="#888" /></svg></Resize>
                  </MapFrame>
                  <MiniTools $h={20} $pl={2}>
                    <AddCross /><IconBox $ml={4}><Pdf /></IconBox><IconBox $ml={3}><Pin lines /></IconBox>
                    <IconBox $ml={193}><SelectBoxUi $w={87} $plain>1:8,976,836<Caret $mt={2} /></SelectBoxUi></IconBox>
                  </MiniTools>
                </MapColumn>
                <LayerList />
              </MapWidget>
              <AddBar><span>ADD A NEW LAYER</span><CloseBall /></AddBar>
              <ServerPanel>
                <Heading>MAP SERVER</Heading>
                <Bullets $mt={17} $ml={40} $ls={0.59}>
                  {servers.map((s) => <Bullet key={s}>{s}</Bullet>)}
                  <Bullet $h={20} $lh={18} $mk={2}>- Other WMS server<ServerInput /></Bullet>
                </Bullets>
              </ServerPanel>
            </Main>
          </Columns>
        </PageBody>
      </Page>
      <ScrollBar $w={19} $h={650} $pad="6px 0 4px">
        <Arrow d="u" />
        <Thumb $w={16} $h={101} $m="16px 0 0"><Ridges /></Thumb>
        <Spacer />
        <Arrow d="d" />
      </ScrollBar>
    </Viewport>
  );
}

function FeatureInfo() {
  return (
    <Popup>
      <PopTitle>
        <IELogo />
        <Text $ml={3} $ls={-0.4} $w={350}>Geoserver GetFeatureInfo output - Internet Explorer provided by ...</Text>
        <WinButton $blue $ml={3}><Glyph kind="min" /></WinButton>
        <WinButton $blue><Glyph kind="max" /></WinButton>
        <WinButton $red><Glyph kind="x" light /></WinButton>
      </PopTitle>
      <PopNav>
        <DiscPair $blue>
          <NavDisc dir="l" fill="#a9bfd8" edge="#c8daee" arrow="#dbe7f3" />
          <NavDisc dir="r" fill="#a9bfd8" edge="#c8daee" arrow="#dbe7f3" />
        </DiscPair>
        <Caret $ml={5} $c="#8ea6c2" />
        <Field $w={198} $ml={11} $bg="#e9f1fb">
          <svg width="16" height="16" viewBox="0 0 16 16"><rect width="16" height="16" rx="2" fill="#e8702a" /><path d="M3 4q1.500-1.500 3 0t4 0 3 0v3l-2 1 2 1v3q-1.500 1.500-3 0t-4 0-3 0V9l2-1-2-1z" stroke="#fff" strokeWidth="1.600" fill="none" /></svg>
          <Text $ml={5} $c="#777c82" $ls={-0.2}>http://gems.<Strong>uwi...</Strong></Text>
          <Spacer />
          <Caret />
          <IconBox $ml={5} />
          <FieldCell $w={25}><Refresh /></FieldCell>
          <FieldCell $w={25}><RedX /></FieldCell>
        </Field>
        <Field $w={180} $ml={6} $bg="#e9f1fb" $open>
          <GoogleIcon />
          <Text $ml={5} $c="#555" $italic $ls={-0.3}>Google</Text>
          <Spacer />
          <Magnifier />
          <Caret $ml={10} />
        </Field>
      </PopNav>
      <PopContent>
        <PopMain>
          <Doc>
            <DocTitle>BOUNDARIES</DocTitle>
            <Row $head $h={26}>
              <Cell $pl={22}>FID</Cell><Cell $pl={3}>ADM0_CODE</Cell><Cell $pl={3}>COUNT</Cell><Cell $pl={3}>ADM0NAME</Cell><Cell $pl={3}>LAST_UP</Cell>
            </Row>
            <Row $h={46}>
              <Cell $j="flex-end">boundaries.42</Cell><Cell>46</Cell><Cell $pl={3}>1532</Cell><Cell $ls={-0.4}>Canada</Cell><Cell>20050415</Cell>
            </Row>
          </Doc>
          <ScrollBar $w={17} $h={137} $pad="5px 0 3px">
            <Arrow d="u" />
            <Thumb $w={15} $h={87} $m="9px 0 0"><Ridges /></Thumb>
            <Spacer />
            <Arrow d="d" />
          </ScrollBar>
        </PopMain>
        <ScrollBar $x $w={445} $h={17} $pad="0 5px 0 4px">
          <Arrow d="l" />
          <Thumb $x $w={207} $h={15} $m="0 0 0 18px"><Ridges x /></Thumb>
          <Spacer />
          <Arrow d="r" />
        </ScrollBar>
      </PopContent>
      <Status>
        <VLine $ml={25} $c="#d0cccc" /><VLine $ml={23} $c="#d0cccc" />
        <Lowered $t={2} $ml={4}><svg width="16" height="16" viewBox="0 0 16 16"><circle cx="8" cy="8" r="7.500" fill="#2f7cc4" /><path d="M2 4l4-3 4 2-2 4-4 3zM10 7l5-1-1 5z" fill="#43b04a" /></svg></Lowered>
        <Text $ml={3} $ls={-0.45} $w={247}>Internet | Protected Mode: Off</Text>
        <VLine $c="#d0cccc" />
        <Lowered $t={3} $ml={8}><svg width="16" height="14" viewBox="0 0 16 14"><circle cx="10" cy="7" r="5" fill="#ddd" stroke="#999" /><path d="M0 8l6-4v3h4v3H6z" fill="#aaa" /><path d="M10 4v3h2" stroke="#777" fill="none" /></svg></Lowered>
        <Lowered $t={8} $ml={6}><Caret $c="#333" /></Lowered>
        <VLine $ml={4} $c="#d0cccc" />
        <Lowered $t={2} $ml={10}><svg width="12" height="12" viewBox="0 0 12 12"><circle cx="6" cy="5.500" r="4.500" fill="#dcebfa" stroke="#3d78bf" strokeWidth="1.400" /><path d="M6 3v5M3.500 5.500h5" stroke="#2760a8" strokeWidth="1.500" /></svg></Lowered>
        <Text $ml={2} $ls={-0.4} $w={45}>100%</Text>
        <Lowered $t={8}><Caret $c="#333" /></Lowered>
      </Status>
    </Popup>
  );
}

function Tasks() {
  return (
    <TaskBar>
      <Orb>
        <svg width="43" height="42" viewBox="0 0 43 42">
          <defs><linearGradient id="orb" x1="0" y1="0" x2="0" y2="1"><stop offset="0" stopColor="#b6cad9" /><stop offset=".45" stopColor="#42617c" /><stop offset=".5" stopColor="#143c5c" /><stop offset="1" stopColor="#25bdf2" /></linearGradient></defs>
          <circle cx="21.500" cy="21" r="20" fill="url(#orb)" stroke="#26536f" strokeWidth="1.500" />
          <g transform="translate(8.500 7.500)"><WinFlag size={27} /></g>
        </svg>
      </Orb>
      <Grip $w={8} $h={24} $c="#26282a" />
      <Task $ml={8}><IELogo /><Text $ml={3} $c="#fff" $ls={-0.3}>GeoNetwork - The p...</Text></Task>
      <Task $ml={3} $on><IELogo /><Text $ml={4} $c="#fff" $ls={-0.5}>Geoserver GetFeatur...</Text></Task>
      <Spacer />
      <Grip $w={8} $h={24} $c="#26282a" />
      <Text $ml={10} $mt={-2} $c="#e6e6e6" $w={23} $ls={-0.2}>CH</Text>
      <svg width="15" height="13" viewBox="0 0 15 13"><path d="M2 2q5 3 6-1M8 1q4 0 5-1M7 2v3" stroke="#999" fill="none" /><rect x=".5" y="5" width="14" height="7" rx="1" fill="#aaa" stroke="#ddd" /><path d="M2 7.500h11M2 9.500h11" stroke="#444" strokeDasharray="1 1" /></svg>
      <IconBox $ml={11}><svg width="8" height="10" viewBox="0 0 8 10"><path d="M6.500 1L2 5l4.500 4" stroke="#dfe5ef" strokeWidth="2" fill="none" /></svg></IconBox>
      <IconBox $ml={7}><svg width="16" height="15" viewBox="0 0 16 15"><path d="M1 5l7-4 6 3-3 7-6 2z" fill="#c9cdd0" stroke="#6b6f73" /><circle cx="8" cy="6" r="3.200" fill="#a2e4ec" stroke="#fff" /><path d="M10.500 8.500l4 5" stroke="#cfa04a" strokeWidth="1.800" /></svg></IconBox>
      <IconBox $ml={12}><svg width="15" height="16" viewBox="0 0 15 16"><rect x="8" y="2" width="6" height="13" fill="#3a6b3a" stroke="#fff" strokeWidth="1.400" /><path d="M2 0v4M6 0v4" stroke="#e2b44a" strokeWidth="1.500" /><path d="M0 4h8v3L6 10v5H3v-5L0 7z" fill="#fff" stroke="#555" strokeWidth=".5" /></svg></IconBox>
      <IconBox $ml={3}><svg width="16" height="16" viewBox="0 0 16 16"><rect x="4.500" y="1" width="10" height="8" fill="#235fae" stroke="#dce8f5" /><rect x="1" y="4.500" width="9" height="8" fill="#144a94" stroke="#dce8f5" /><circle cx="11" cy="11" r="4.500" fill="#2f84d8" /><path d="M8 9l3-1 1 3-2 2zM12 12l3-1-1 3z" fill="#52c24c" /></svg></IconBox>
      <IconBox $ml={2}><svg width="17" height="15" viewBox="0 0 17 15"><path d="M1 5h3l4-4v13l-4-4H1z" fill="#f4f4f4" stroke="#888" strokeWidth=".7" /><path d="M10 5q2 2.500 0 5M12.500 3q3.500 4.500 0 9" stroke="#7bd49a" fill="none" strokeWidth="1.300" /></svg></IconBox>
      <Text $ml={8} $c="#fff" $ls={-0.4} $w={60}>1:34 PM</Text>
    </TaskBar>
  );
}

export default function App() {
  return (
    <Desktop>
      <Global />
      <Chrome />
      <GeoPage />
      <Tasks />
      <FeatureInfo />
    </Desktop>
  );
}
